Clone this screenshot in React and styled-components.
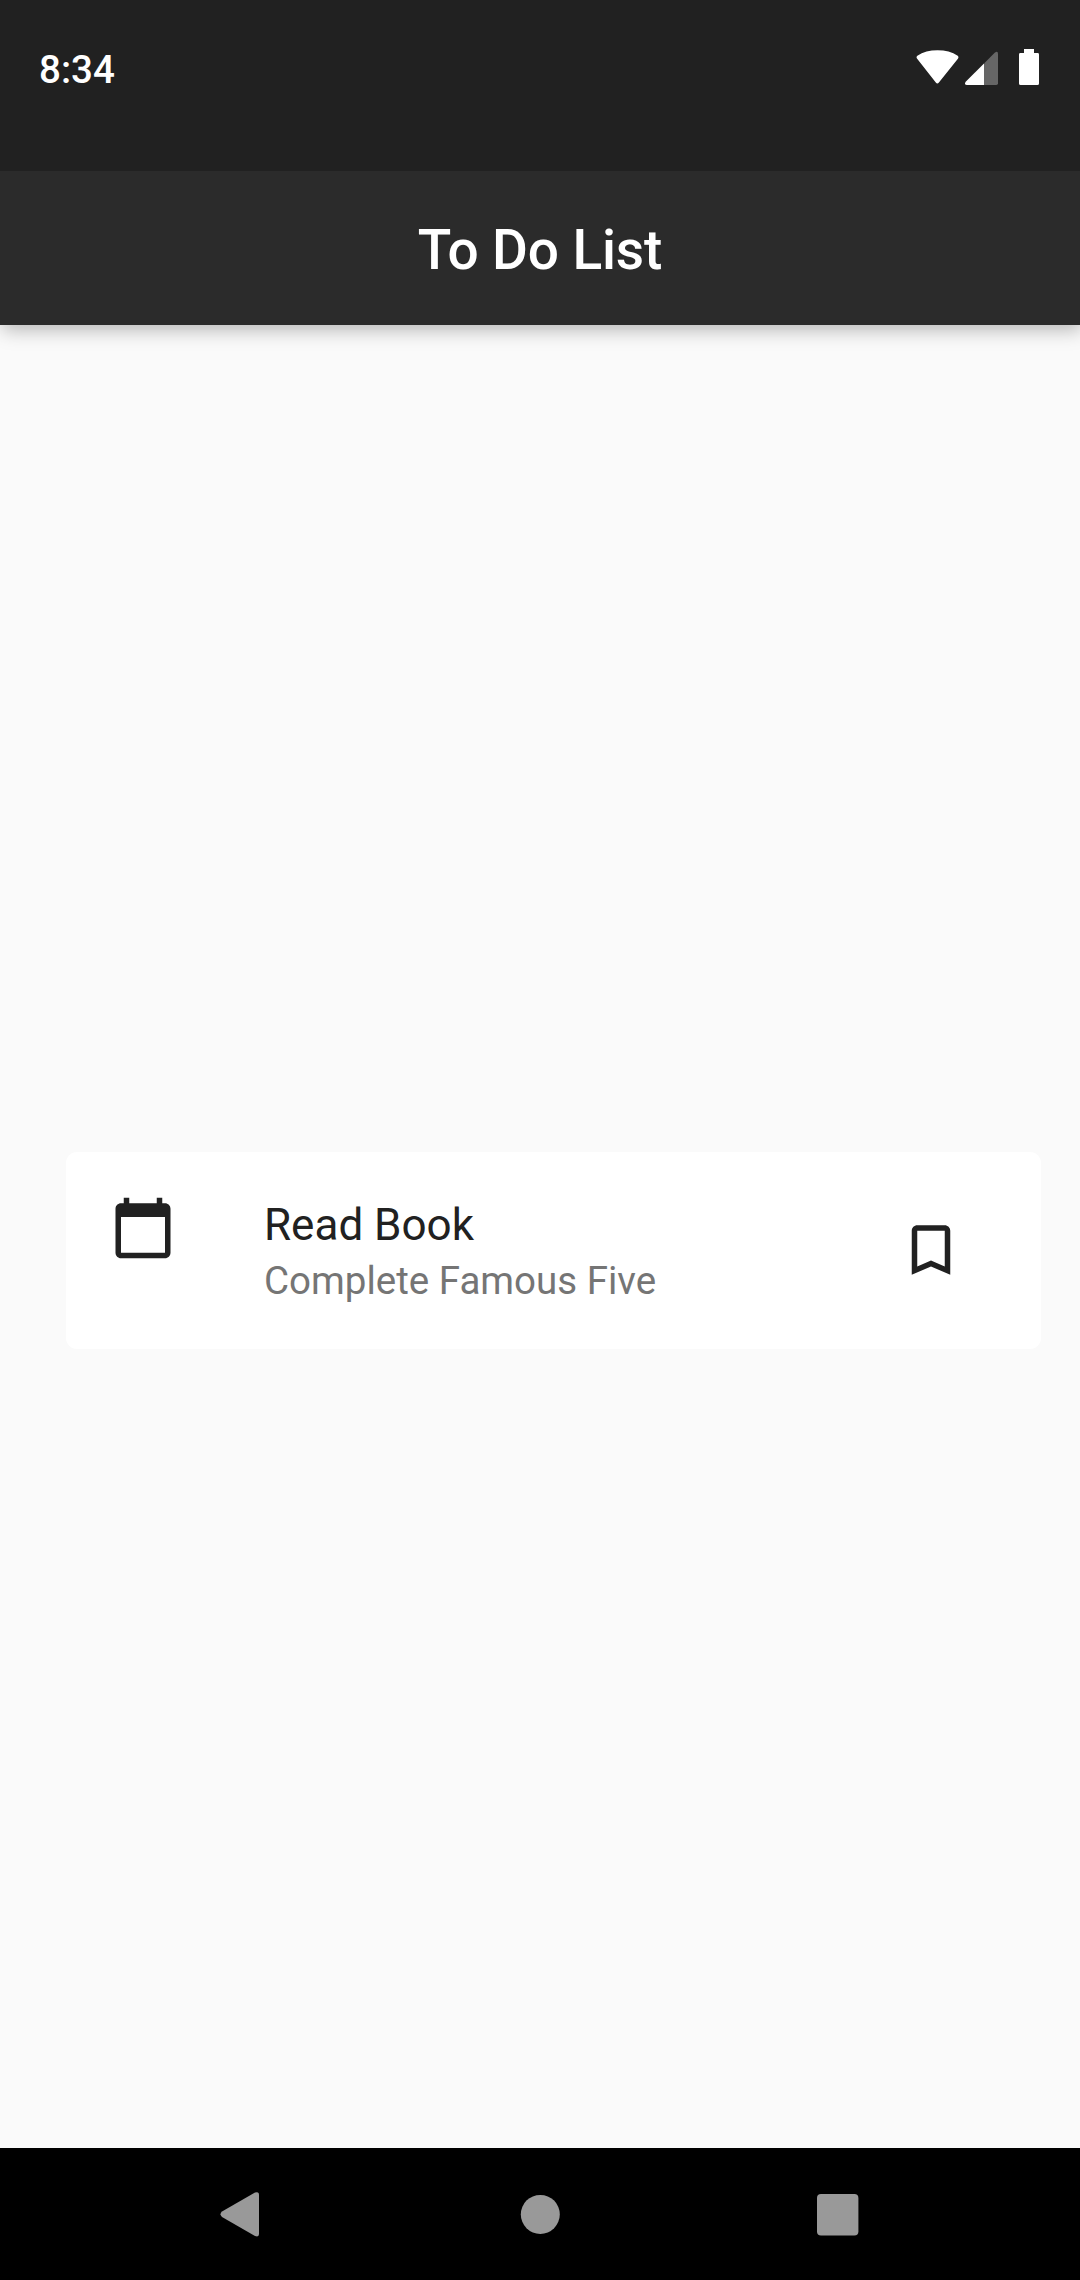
import React from "react";
import styled, { createGlobalStyle } from "styled-components";

const GlobalStyle = createGlobalStyle`
  * { box-sizing: border-box; }
  body { margin: 0; background: #fafafa; }
`;

const Screen = styled.div`
  display: flex;
  flex-direction: column;
  width: 1080px;
  height: 2280px;
  overflow: hidden;
  background: #fafafa;
  font-family: Roboto, "Liberation Sans", sans-serif;
`;

const StatusBar = styled.header`
  display: flex;
  justify-content: space-between;
  align-items: flex-start;
  height: 171px;
  padding: 46px 41px 0 39px;
  background: #212121;
`;

const Clock = styled.time`
  margin-top: 1px;
  font-size: 38.5px;
  font-weight: 500;
  line-height: 46px;
  color: #fff;
`;

const StatusIcons = styled.div`
  display: flex;
  align-items: flex-start;
`;

const StatusIcon = styled.svg`
  display: block;
  flex: none;
  margin-left: ${(p) => p.$gap || 0}px;
`;

const AppBar = styled.div`
  display: flex;
  justify-content: center;
  align-items: center;
  height: 154px;
  padding-top: 3px;
  background: #2b2b2b;
  box-shadow: 2px 5px 18px rgba(0, 0, 0, 0.27);
  clip-path: inset(0 0 -40px 0);
  z-index: 1;
`;

const Title = styled.h1`
  margin: 0;
  font-size: 55px;
  font-weight: 500;
  line-height: 64px;
  letter-spacing: -0.15px;
  color: #fff;
`;

const Content = styled.main`
  display: flex;
  flex: 1;
  flex-direction: column;
  padding: 826.5px 38.6px 0 66px;
`;

const Card = styled.article`
  display: flex;
  height: 197.5px;
  padding: 43.25px 77px 0 44px;
  border-radius: 11px;
  background: #fff;
`;

const CardIcon = styled.svg`
  display: block;
  flex: none;
  width: 66px;
  height: 66px;
  margin-top: ${(p) => p.$drop || 0}px;
  fill: #212121;
`;

const CardText = styled.div`
  display: flex;
  flex: 1;
  flex-direction: column;
  padding-left: 88px;
`;

const TaskName = styled.h2`
  margin: 4.25px 0 0;
  font-size: 44px;
  font-weight: 400;
  line-height: 52px;
  color: #212121;
`;

const TaskNote = styled.p`
  margin: 7px 0 0;
  font-size: 38.5px;
  font-weight: 400;
  line-height: 46px;
  color: #757575;
`;

const NavBar = styled.nav`
  display: grid;
  grid-template-columns: 240px 1fr 240px;
  align-items: center;
  height: 132px;
  padding: 0 122px;
  background: #000;
`;

const NavButton = styled.button`
  display: flex;
  justify-content: center;
  padding: 0;
  border: 0;
  background: none;
`;

const NavIcon = styled.svg`
  display: block;
  width: 60px;
  height: 60px;
  fill: #999;
`;

export default function App() {
  return (
    <Screen>
      <GlobalStyle />
      <StatusBar>
        <Clock>8:34</Clock>
        <StatusIcons>
          <StatusIcon width="44" height="40" viewBox="0 0 44 40" aria-label="Wi-Fi">
            <path
              fill="#fff"
              d="M1.2 12.6Q-.2 11 1.4 9.6Q10 4.2 22.2 4.2T43 9.6Q44.4 11 43.2 12.6L23.6 36.4Q22 38.2 20.4 36.4Z"
              transform="translate(0 .1) scale(.97 1)"
            />
          </StatusIcon>
          <StatusIcon $gap={5} width="33" height="40" viewBox="0 0 33 40" aria-label="Signal">
            <path fill="#666" d="M19 17.6 29.7 6.7Q33 4.4 33 8V37.3Q33 39 31.3 39H19Z" />
            <path fill="#fff" d="M19 17.4V39H2Q-1.2 38.6.7 35.7Z" />
          </StatusIcon>
          <StatusIcon $gap={21} width="20" height="40" viewBox="0 0 20 40" aria-label="Battery">
            <path
              fill="#fff"
              d="M5 3h10v4h3.6Q20 7 20 8.4V37.4Q20 39 18.4 39H1.6Q0 39 0 37.4V8.4Q0 7 1.4 7H5Z"
            />
          </StatusIcon>
        </StatusIcons>
      </StatusBar>
      <AppBar>
        <Title>To Do List</Title>
      </AppBar>
      <Content>
        <Card>
          <CardIcon viewBox="0 0 24 24">
            <path d="M20 3h-1V1h-2v2H7V1H5v2H4c-1.1 0-2 .9-2 2v16c0 1.1.9 2 2 2h16c1.1 0 2-.9 2-2V5c0-1.1-.9-2-2-2zm0 18H4V8h16v13z" />
          </CardIcon>
          <CardText>
            <TaskName>Read Book</TaskName>
            <TaskNote>Complete Famous Five</TaskNote>
          </CardText>
          <CardIcon viewBox="0 0 24 24" $drop={22}>
            <path d="M17 3H7c-1.1 0-2 .9-2 2v16l7-3 7 3V5c0-1.1-.9-2-2-2zm0 15l-5-2.18L7 18V5h10v13z" />
          </CardIcon>
        </Card>
      </Content>
      <NavBar>
        <NavButton aria-label="Back">
          <NavIcon viewBox="0 0 60 60">
            <path d="M10 33Q7 30.3 10 27.6L43 8.6Q47 7 47 11V50Q47 53.6 43 52Z" />
          </NavIcon>
        </NavButton>
        <NavButton aria-label="Home">
          <NavIcon viewBox="0 0 60 60">
            <circle cx="30.3" cy="30.4" r="19.5" />
          </NavIcon>
        </NavButton>
        <NavButton aria-label="Recents">
          <NavIcon viewBox="0 0 60 60">
            <rect x="9" y="10" width="41.4" height="41.4" rx="4" />
          </NavIcon>
        </NavButton>
      </NavBar>
    </Screen>
  );
}
